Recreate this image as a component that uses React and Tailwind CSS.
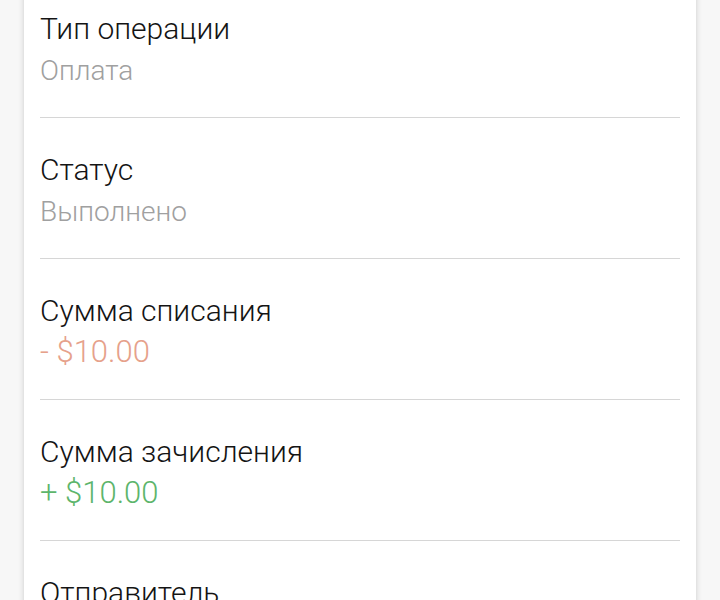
import React from 'react';

const rows = [
    { label: 'Тип операции', value: 'Оплата', color: 'text-[#a0a0a0] text-[28px] mt-[2px]' },
    { label: 'Статус', value: 'Выполнено', color: 'text-[#a0a0a0] text-[28px] mt-[2px]' },
    { label: 'Сумма списания', value: '- $10.00', color: 'text-[#e6a18b] text-[31px] mt-[1px] mb-[1px]' },
    { label: 'Сумма зачисления', value: '+ $10.00', color: 'text-[#5db56b] text-[31px] mt-[1px] mb-[1px]' },
    { label: 'Отправитель', value: 'Иван Петров', color: 'text-[#a0a0a0] text-[28px] mt-[2px]' },
];

export default function App() {
    return (
        <div className="h-[600px] overflow-hidden bg-[#f7f7f7] px-6 font-['Roboto',sans-serif] font-light">
            <div className="-mt-[23px] bg-white px-4 shadow-[0_0_6px_rgba(0,0,0,0.18)]">
                {rows.map((row, i) => (
                    <div
                        key={row.label}
                        className={`pt-[32px] pb-[26px] ${i < rows.length - 1 ? 'border-b border-[#d6d6d6]' : ''}`}
                    >
                        <div className="text-[30px] leading-[40px] text-[#141414]">{row.label}</div>
                        <div className={`leading-[40px] ${row.color}`}>{row.value}</div>
                    </div>
                ))}
            </div>
        </div>
    );
}
